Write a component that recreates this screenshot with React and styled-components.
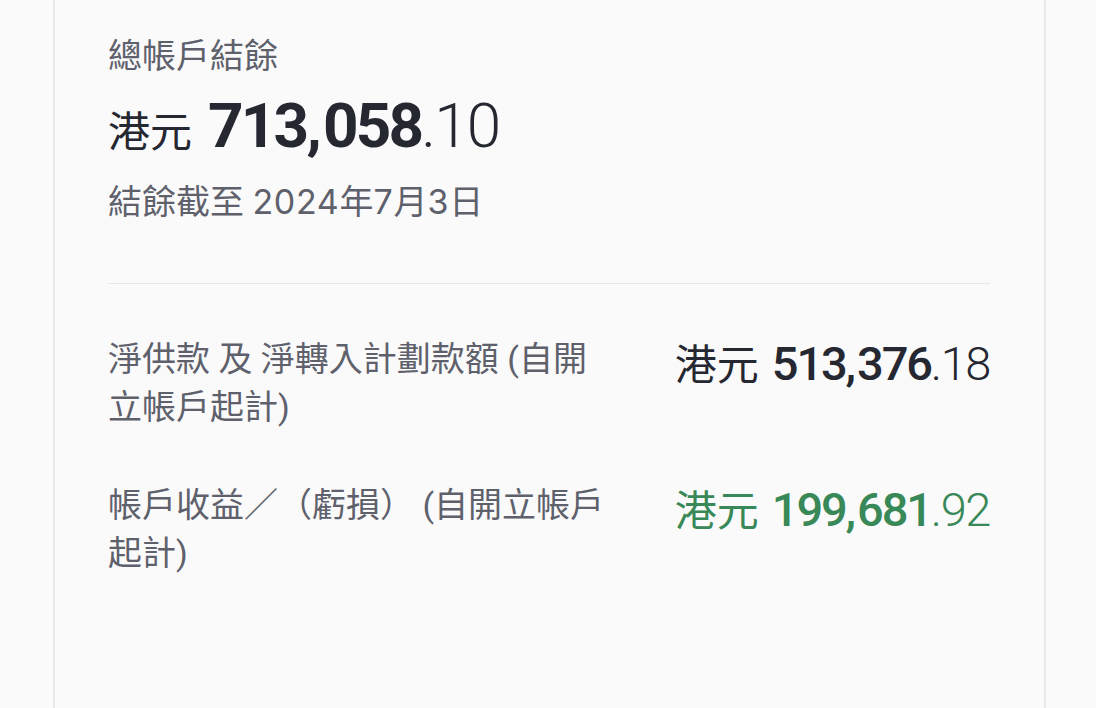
import React from "react";
import styled, { createGlobalStyle } from "styled-components";

const Global = createGlobalStyle`
  html, body { margin: 0; padding: 0; background: #fafafa; }
  body { font-family: Roboto, "Noto Sans CJK TC", sans-serif; }
`;

const CJK = `Roboto, "Noto Sans CJK TC", sans-serif`;

const Page = styled.div`
  height: 708px;
  overflow: hidden;
  background: #fafafa;
  padding-left: 53px;
  box-sizing: border-box;
`;

const Card = styled.section`
  width: 993px;
  height: 708px;
  box-sizing: border-box;
  border-left: 2px solid #e9e9e9;
  border-right: 2px solid #e9e9e9;
  padding: 33px 54px 0 53px;
  display: flex;
  flex-direction: column;
`;

const Title = styled.div`
  font-size: 34px;
  line-height: 46px;
  color: #5e616c;
  font-family: ${CJK};
`;

const Amount = styled.div`
  display: flex;
  align-items: baseline;
  color: ${(p) => p.$color || "#252731"};
  font-family: ${CJK};
  line-height: 1;
  margin-top: ${(p) => p.$top}px;
  white-space: nowrap;
`;

const Currency = styled.span`
  font-size: ${(p) => p.$size}px;
  margin-right: ${(p) => p.$gap}px;
`;

const Whole = styled.span`
  font-family: Roboto, sans-serif;
  font-size: ${(p) => p.$size}px;
  font-weight: ${(p) => p.$weight};
  letter-spacing: -0.045em;
`;

const Comma = styled.span`
  letter-spacing: 0;
  margin-right: 0.02em;
`;

const Frac = styled.span`
  font-family: Roboto, sans-serif;
  font-size: ${(p) => p.$size}px;
  font-weight: 300;
  letter-spacing: -0.03em;
`;

const DateLine = styled.div`
  margin-top: 22px;
  font-size: 34px;
  line-height: 46px;
  color: #5e616c;
  font-family: ${CJK};
`;

const DateNum = styled.span`
  font-family: Inter, sans-serif;
  letter-spacing: 0.02em;
`;

const Divider = styled.hr`
  margin: 58px 0 0 0;
  border: none;
  border-top: 1.5px solid #e6e6e6;
  width: 100%;
`;

const List = styled.div`
  margin-top: 51px;
  display: flex;
  flex-direction: column;
  gap: 50px;
`;

const Row = styled.div`
  display: flex;
  justify-content: space-between;
  align-items: flex-start;
`;

const Label = styled.div`
  width: 505px;
  font-size: 34px;
  line-height: 48px;
  color: #5e616c;
  font-family: ${CJK};
`;

function Money({ whole, frac, color, cur, num, gap, top, weight }) {
  const [a, b] = whole.split(",");
  return (
    <Amount $color={color} $top={top}>
      <Currency $size={cur} $gap={gap}>港元</Currency>
      <Whole $size={num} $weight={weight}>
        {a}
        <Comma>,</Comma>
        {b}
      </Whole>
      <Frac $size={num}>.{frac}</Frac>
    </Amount>
  );
}

export default function App() {
  return (
    <Page>
      <Global />
      <Card>
        <Title>總帳戶結餘</Title>
        <Money top={16} cur={42} num={62} gap={16} weight={700} whole="713,058" frac="10" />
        <DateLine>
          結餘截至 <DateNum>2024</DateNum>年<DateNum>7</DateNum>月<DateNum>3</DateNum>日
        </DateLine>
        <Divider />
        <List>
          <Row>
            <Label>淨供款 及 淨轉入計劃款額 (自開立帳戶起計)</Label>
            <Money top={5} cur={42} num={47} gap={13} weight={500} whole="513,376" frac="18" />
          </Row>
          <Row>
            <Label>帳戶收益／（虧損） (自開立帳戶起計)</Label>
            <Money top={5} cur={42} num={47} gap={13} weight={500} color="#388858" whole="199,681" frac="92" />
          </Row>
        </List>
      </Card>
    </Page>
  );
}
